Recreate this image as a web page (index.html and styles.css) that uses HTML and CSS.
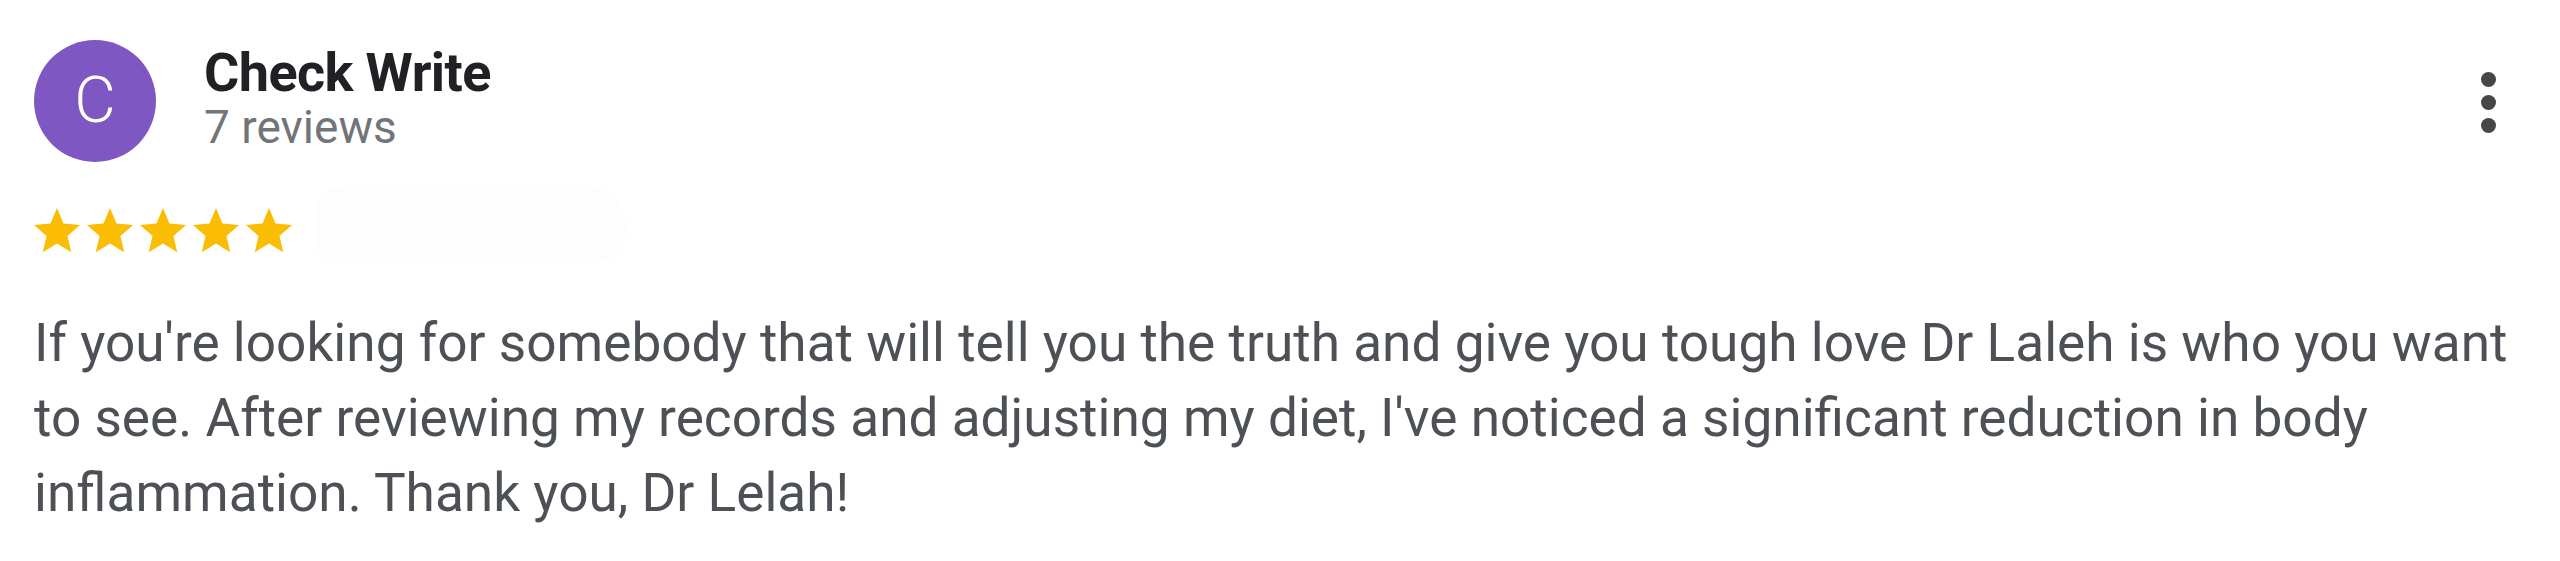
FILE: index.html
```html
<!DOCTYPE html>
<html lang="en">
<head>
<meta charset="utf-8">
<title>Review</title>
<link rel="stylesheet" href="styles.css">
</head>
<body>
<div class="review">
  <div class="header">
    <div class="author">
      <div class="avatar">C</div>
      <div class="meta">
        <div class="name">Check Write</div>
        <div class="count">7 reviews</div>
      </div>
    </div>
    <div class="menu" aria-label="More options">
      <span class="dot"></span>
      <span class="dot"></span>
      <span class="dot"></span>
    </div>
  </div>
  <div class="rating">
    <svg class="star" viewBox="2 2 20 19.3" preserveAspectRatio="none"><path d="M12 17.27L18.18 21l-1.64-7.03L22 9.24l-7.19-.61L12 2 9.19 8.63 2 9.24l5.46 4.73L5.82 21z"/></svg>
    <svg class="star" viewBox="2 2 20 19.3" preserveAspectRatio="none"><path d="M12 17.27L18.18 21l-1.64-7.03L22 9.24l-7.19-.61L12 2 9.19 8.63 2 9.24l5.46 4.73L5.82 21z"/></svg>
    <svg class="star" viewBox="2 2 20 19.3" preserveAspectRatio="none"><path d="M12 17.27L18.18 21l-1.64-7.03L22 9.24l-7.19-.61L12 2 9.19 8.63 2 9.24l5.46 4.73L5.82 21z"/></svg>
    <svg class="star" viewBox="2 2 20 19.3" preserveAspectRatio="none"><path d="M12 17.27L18.18 21l-1.64-7.03L22 9.24l-7.19-.61L12 2 9.19 8.63 2 9.24l5.46 4.73L5.82 21z"/></svg>
    <svg class="star" viewBox="2 2 20 19.3" preserveAspectRatio="none"><path d="M12 17.27L18.18 21l-1.64-7.03L22 9.24l-7.19-.61L12 2 9.19 8.63 2 9.24l5.46 4.73L5.82 21z"/></svg>
    <span class="redact"></span>
  </div>
  <p class="text">If you're looking for somebody that will tell you the truth and give you tough love Dr Laleh is who you want to see. After reviewing my records and adjusting my diet, I've noticed a significant reduction in body inflammation. Thank you, Dr Lelah!</p>
</div>
</body>
</html>
```
FILE: styles.css
```css
html, body {
  margin: 0;
  padding: 0;
  background: #ffffff;
}

body {
  font-family: Roboto, "Liberation Sans", Arial, sans-serif;
}

.review {
  padding: 40px 6px 0 34px;
}

.header {
  display: flex;
  justify-content: space-between;
  align-items: flex-start;
}

.author {
  display: flex;
  align-items: flex-start;
  gap: 48px;
}

.avatar {
  width: 122px;
  height: 122px;
  border-radius: 50%;
  background: #7e57c2;
  color: #ffffff;
  font-size: 64px;
  line-height: 122px;
  text-align: center;
  font-weight: 300;
}

.meta {
  padding-top: 2px;
}

.name {
  font-size: 54px;
  line-height: 62px;
  font-weight: 700;
  letter-spacing: -0.6px;
  color: #202124;
}

.count {
  font-size: 46px;
  line-height: 46px;
  color: #70757a;
}

.menu {
  display: flex;
  flex-direction: column;
  gap: 8px;
  margin-top: 32px;
  margin-right: 58px;
}

.dot {
  width: 15px;
  height: 15px;
  border-radius: 50%;
  background: #474747;
}

.rating {
  position: relative;
  display: flex;
  gap: 7px;
  margin-top: 46px;
  height: 45px;
}

.star {
  width: 46px;
  height: 45px;
  fill: #fbbc04;
}

.redact {
  position: absolute;
  left: 280px;
  top: -22px;
  width: 312px;
  height: 78px;
  background: #fdfdfd;
  border-radius: 30px 40px 34px 26px;
}

.text {
  margin: 53px 0 0 0;
  font-size: 53.2px;
  line-height: 75px;
  color: #4d5156;
}
```
